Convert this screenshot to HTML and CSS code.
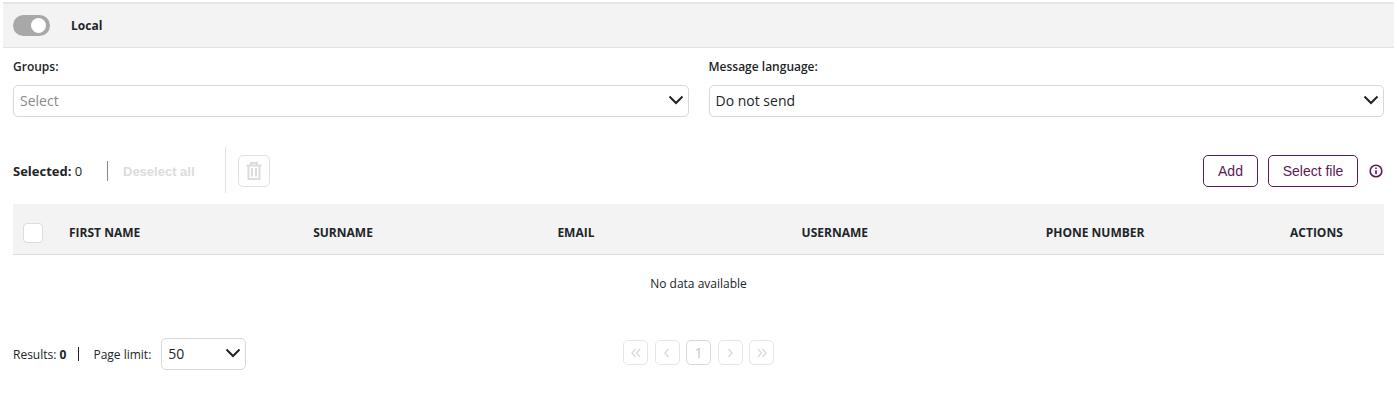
FILE: index.html
```html
<!DOCTYPE html>
<html lang="en">
<head>
    <meta charset="UTF-8">
    <title>Users</title>
    <link rel="stylesheet" href="styles.css">
</head>
<body>
    <div class="page">
        <div class="source-bar">
            <span class="toggle"><span class="toggle-knob"></span></span>
            <span class="source-label">Local</span>
        </div>

        <div class="content">
            <div class="fields">
                <div class="field">
                    <label class="field-label">Groups:</label>
                    <div class="select">
                        <span class="placeholder">Select</span>
                        <svg class="chevron" viewBox="0 0 16 10"><path d="M1.500 1.500 8 8l6.500-6.500"/></svg>
                    </div>
                </div>
                <div class="field">
                    <label class="field-label">Message language:</label>
                    <div class="select">
                        <span>Do not send</span>
                        <svg class="chevron" viewBox="0 0 16 10"><path d="M1.500 1.500 8 8l6.500-6.500"/></svg>
                    </div>
                </div>
            </div>

            <div class="toolbar">
                <div class="selection">
                    <span class="selected"><strong>Selected:</strong> 0</span>
                    <span class="deselect">Deselect all</span>
                </div>
                <div class="bulk">
                    <button class="icon-btn" type="button" aria-label="Delete">
                        <svg viewBox="0 0 16 18" width="16" height="18"><path d="M.5 3.500h15M5 3V1h6v2M2.500 3.500v13.500h11V3.500M6 6v8.500M10 6v8.500"/></svg>
                    </button>
                </div>
                <div class="actions">
                    <button class="btn btn-add" type="button">Add</button>
                    <button class="btn btn-file" type="button">Select file</button>
                    <svg class="info" viewBox="0 0 14 14" width="14" height="14"><circle cx="7" cy="7" r="5.800"/><path d="M7 6.300v4M7 3.500v1.500"/></svg>
                </div>
            </div>

            <table class="table">
                <thead>
                    <tr>
                        <th class="col-check"><span class="checkbox"></span></th>
                        <th>FIRST NAME</th>
                        <th>SURNAME</th>
                        <th>EMAIL</th>
                        <th>USERNAME</th>
                        <th>PHONE NUMBER</th>
                        <th class="col-actions">ACTIONS</th>
                    </tr>
                </thead>
                <tbody>
                    <tr><td class="empty" colspan="7">No data available</td></tr>
                </tbody>
            </table>

            <div class="footer">
                <div class="limits">
                    <span>Results: <strong>0</strong></span>
                    <span class="pipe"></span>
                    <span>Page limit:</span>
                    <div class="select select-small">
                        <span>50</span>
                        <svg class="chevron" viewBox="0 0 16 10"><path d="M1.500 1.500 8 8l6.500-6.500"/></svg>
                    </div>
                </div>
                <div class="pager">
                    <span class="page-btn"><svg viewBox="0 0 10 10" width="10" height="10"><path d="M4.500 1 1 5l3.500 4M9 1 5.500 5 9 9"/></svg></span>
                    <span class="page-btn"><svg viewBox="0 0 10 10" width="10" height="10"><path d="M6.500 1 3 5l3.500 4"/></svg></span>
                    <span class="page-btn page-current">1</span>
                    <span class="page-btn"><svg viewBox="0 0 10 10" width="10" height="10"><path d="M3.500 1 7 5 3.500 9"/></svg></span>
                    <span class="page-btn"><svg viewBox="0 0 10 10" width="10" height="10"><path d="M1 1l3.500 4L1 9M5.500 1 9 5 5.500 9"/></svg></span>
                </div>
            </div>
        </div>
    </div>
</body>
</html>
```

FILE: styles.css
```css
* {
    box-sizing: border-box;
}

body {
    margin: 0;
    font-family: 'Open Sans', sans-serif;
    font-size: 12px;
    color: #212529;
    background: #fff;
}

.page {
    padding: 2px 3px 0;
}

.source-bar {
    display: flex;
    align-items: center;
    height: 46px;
    padding-left: 10px;
    background: #f3f3f3;
    border-top: 2px solid #e5e5e5;
    border-bottom: 1px solid #e2e2e2;
}

.toggle {
    display: flex;
    justify-content: flex-end;
    align-items: center;
    width: 37px;
    height: 21px;
    padding-right: 4px;
    border-radius: 11px;
    background: #a8a8a8;
}

.toggle-knob {
    width: 15px;
    height: 15px;
    border-radius: 50%;
    background: #fff;
}

.source-label {
    margin-left: 21px;
    font-weight: 700;
}

.content {
    padding: 0 10px;
}

.fields {
    display: flex;
    gap: 20px;
    margin-top: 10px;
}

.field {
    flex: 1;
}

.field-label {
    display: block;
    height: 27px;
    font-weight: 600;
    line-height: 17px;
}

.select {
    display: flex;
    justify-content: space-between;
    align-items: center;
    height: 32px;
    padding: 0 4px 2px 6px;
    border: 1px solid #d8d8d8;
    border-radius: 5px;
    font-size: 14px;
    background: #fff;
}

.placeholder {
    color: #8a8a8a;
}

.chevron {
    width: 16px;
    height: 10px;
    fill: none;
    stroke: #222;
    stroke-width: 2;
}

.toolbar {
    display: flex;
    align-items: center;
    height: 46px;
    margin-top: 30px;
}

.selection {
    display: flex;
    align-items: center;
    width: 213px;
    height: 46px;
    padding-top: 2px;
    border-right: 1px solid #e2e2e2;
}

.selected {
    width: 95px;
    height: 20px;
    line-height: 20px;
    border-right: 1px solid #8a8a8a;
    font-size: 13px;
}

.deselect {
    margin-left: 15px;
    font-family: 'Liberation Sans', sans-serif;
    font-size: 13px;
    font-weight: 700;
    color: #dcdcdc;
}

.bulk {
    margin-left: 12px;
}

.icon-btn {
    display: flex;
    align-items: center;
    justify-content: center;
    width: 32px;
    height: 32px;
    margin-top: 2px;
    padding: 0;
    background: #fff;
    border: 1px solid #e0e0e0;
    border-radius: 5px;
}

.icon-btn path {
    fill: none;
    stroke: #dcdcdc;
    stroke-width: 2;
}

.actions {
    display: flex;
    align-items: center;
    margin-top: 2px;
    margin-left: auto;
}

.btn {
    height: 32px;
    padding: 0;
    font-family: 'Liberation Sans', sans-serif;
    font-size: 14px;
    color: #5b1a55;
    background: #fff;
    border: 1px solid #5b1a55;
    border-radius: 5px;
}

.btn-add {
    width: 55px;
}

.btn-file {
    width: 90px;
    margin-left: 10px;
}

.info {
    margin: 0 1px 0 11px;
}

.info circle,
.info path {
    fill: none;
    stroke: #5b1a55;
    stroke-width: 1.600;
}

.table {
    width: 100%;
    margin-top: 11px;
    border-collapse: collapse;
    table-layout: fixed;
}

.table th {
    height: 50px;
    padding: 8px 0 0;
    text-align: left;
    font-weight: 700;
    background: #f3f3f3;
    border-bottom: 1px solid #dcdcdc;
}

.table th.col-check {
    width: 56px;
    padding-left: 10px;
}

.table th.col-actions {
    width: 94px;
}

.checkbox {
    display: block;
    width: 20px;
    height: 20px;
    background: #fff;
    border: 1px solid #dcdcdc;
    border-radius: 4px;
}

.empty {
    height: 58px;
    text-align: center;
}

.footer {
    display: flex;
    align-items: flex-start;
    margin-top: 26px;
}

.limits {
    display: flex;
    align-items: center;
    width: 610px;
}

.pipe {
    width: 1px;
    height: 14px;
    margin: 0 14px 0 12px;
    background: #222;
}

.select-small {
    width: 85px;
    margin-left: 10px;
}

.pager {
    display: flex;
    gap: 6.500px;
    margin-top: 2px;
}

.page-btn {
    display: flex;
    align-items: center;
    justify-content: center;
    width: 25px;
    height: 25px;
    border: 1px solid #e6e6e6;
    border-radius: 5px;
}

.page-btn path {
    fill: none;
    stroke: #d8d8d8;
    stroke-width: 1.300;
}

.page-current {
    padding-bottom: 1px;
    border-color: #d8d8d8;
    color: #c8c8c8;
    font-size: 15px;
}
```
